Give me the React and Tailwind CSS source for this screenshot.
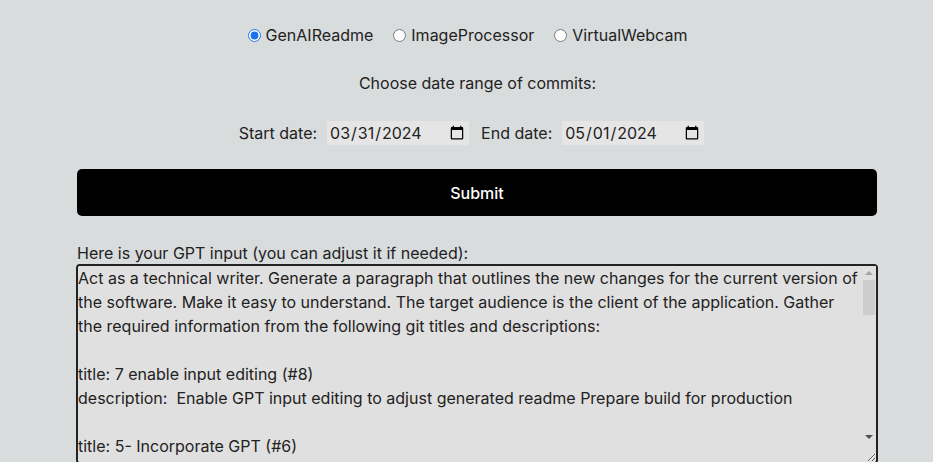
import React, { useState } from 'react';

const projects = ['GenAIReadme', 'ImageProcessor', 'VirtualWebcam'];

const defaultPrompt = `Act as a technical writer. Generate a paragraph that outlines the new changes for the current version of the software. Make it easy to understand. The target audience is the client of the application. Gather the required information from the following git titles and descriptions:

title: 7 enable input editing (#8)
description:  Enable GPT input editing to adjust generated readme Prepare build for production

title: 5- Incorporate GPT (#6)
description:  Send the commit list to GPT and display the generated readme

title: 3- Select date range (#4)
description:  Add date pickers to filter commits by date

title: 1- Fetch repositories (#2)
description:  List the user repositories and allow choosing one`;

export default function App() {
  const [project, setProject] = useState('GenAIReadme');
  const [startDate, setStartDate] = useState('2024-03-31');
  const [endDate, setEndDate] = useState('2024-05-01');
  const [prompt, setPrompt] = useState(defaultPrompt);

  return (
    <div
      className="min-h-screen bg-[#d9dcdd] text-[#222] text-base overflow-hidden"
      style={{ fontFamily: 'Inter, "Noto Sans", sans-serif' }}
    >
      {/* project picker */}
      <div className="flex justify-center gap-[20px] pt-[25px] h-[46px] pl-[2px]">
        {projects.map((p) => (
          <label key={p} className="flex items-center gap-[5px] h-[20px] leading-5">
            <input
              type="radio"
              name="project"
              checked={project === p}
              onChange={() => setProject(p)}
              className="w-[13px] h-[13px] m-0 accent-[#1a73e8]"
            />
            <span>{p}</span>
          </label>
        ))}
      </div>

      <p className="text-center mt-[25px] leading-6 pl-[22px]">Choose date range of commits:</p>

      {/* dates */}
      <div className="flex justify-center items-center mt-[26px] pl-[10px] h-[24px]">
        <span>Start date:</span>
        <input
          type="date"
          value={startDate}
          onChange={(e) => setStartDate(e.target.value)}
          className="ml-[10px] w-[142px] h-[24px] bg-[#e5e5e5] px-[2px] leading-6"
        />
        <span className="ml-[12px]">End date:</span>
        <input
          type="date"
          value={endDate}
          onChange={(e) => setEndDate(e.target.value)}
          className="ml-[10px] w-[142px] h-[24px] bg-[#e5e5e5] px-[2px] leading-6"
        />
      </div>

      <div className="pl-[77px] mt-[24px]">
        <button className="w-[800px] h-[47px] bg-black text-white font-medium rounded-[5px]">
          Submit
        </button>

        <p className="mt-[25px] leading-6">Here is your GPT input (you can adjust it if needed):</p>
      </div>

      <div className="pl-[76px]">
        <div className="relative w-[802px] -mt-[1px]">
          <textarea
            value={prompt}
            onChange={(e) => setPrompt(e.target.value)}
            className="block w-[802px] h-[200px] border-2 border-[#222] rounded-[4px] bg-[#e0e0e0] leading-6 p-0 pr-[15px]"
          />
          {/* scrollbar drawn over the textarea */}
          <div className="pointer-events-none absolute top-[2px] right-[2px] w-[15px] h-[178px] bg-[#e0e0e0] flex flex-col items-center">
            <div className="h-[14px] flex items-center justify-center">
              <div className="w-0 h-0 border-l-[4px] border-r-[4px] border-b-[4px] border-l-transparent border-r-transparent border-b-[#a3a3a3]" />
            </div>
            <div className="w-[12px] h-[35px] bg-[#cdcdcd]" />
            <div className="flex-1" />
            <div className="h-[14px] flex items-center justify-center">
              <div className="w-0 h-0 border-l-[4px] border-r-[4px] border-t-[4px] border-l-transparent border-r-transparent border-t-[#505050]" />
            </div>
          </div>
        </div>
      </div>
    </div>
  );
}
